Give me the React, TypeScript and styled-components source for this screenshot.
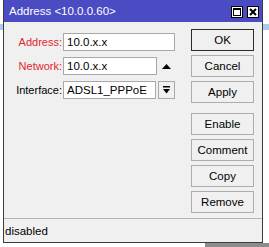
import styled, { createGlobalStyle } from 'styled-components'

const GlobalStyle = createGlobalStyle`
  html, body {
    margin: 0;
    padding: 0;
    background: #fff;
  }
  body {
    font-family: "Liberation Sans", Arial, sans-serif;
    font-size: 11px;
  }
`

const Desktop = styled.div`
  width: 269px;
  height: 247px;
  overflow: hidden;
  display: flex;
  flex-direction: column;
  padding-left: 3px;
  box-sizing: border-box;
  background:
    linear-gradient(90deg, transparent 0 205px, #8c8c8c 205px) bottom / 100% 4px no-repeat,
    linear-gradient(#ffffff 0 24px, #a9cdef 24px 30px, #ffffff 30px);
`

const Window = styled.div`
  width: 260px;
  height: 243px;
  flex: none;
  box-sizing: border-box;
  border: 1px solid #3c3c3c;
  border-top: none;
  background: #f0f0f0;
  display: flex;
  flex-direction: column;
`

const TitleBar = styled.div`
  height: 22px;
  flex: none;
  background: #4b4bc4;
  color: #fff;
  display: flex;
  align-items: center;
  justify-content: space-between;
  padding: 0 3px 0 5px;
  font-size: 11.5px;
`

const TitleButtons = styled.div`
  display: flex;
  gap: 4px;
  padding-top: 2px;
`

const TitleButton = styled.div`
  width: 12px;
  height: 12px;
  box-sizing: border-box;
  border: 1px solid #000;
  background: #fff;
  display: flex;
  align-items: center;
  justify-content: center;
`

const Content = styled.div`
  flex: 1;
  display: flex;
`

const Form = styled.div`
  flex: 1;
  padding-top: 11px;
  display: grid;
  grid-template-columns: 58px 112px;
  grid-auto-rows: 18px;
  column-gap: 1px;
  row-gap: 6px;
  align-content: start;
`

const Label = styled.div<{ $required?: boolean }>`
  display: flex;
  align-items: center;
  justify-content: flex-end;
  color: ${p => (p.$required ? '#e3262b' : '#000')};
`

const Field = styled.div`
  display: flex;
  gap: 1px;
`

const Input = styled.div<{ $width: number }>`
  width: ${p => p.$width}px;
  height: 18px;
  box-sizing: border-box;
  border: 1px solid #a8a8a8;
  background: #fff;
  display: flex;
  align-items: center;
  padding-left: 3px;
  font-size: 11.5px;
`

const ArrowCell = styled.div`
  flex: 1;
  display: flex;
  align-items: center;
  justify-content: center;
`

const DropButton = styled.div`
  width: 17px;
  height: 18px;
  box-sizing: border-box;
  border: 1px solid #a8a8a8;
  background: #f0f0f0;
  display: flex;
  align-items: center;
  justify-content: center;
  margin-left: 1px;
`

const Buttons = styled.div`
  width: 63px;
  padding: 7px 8px 0 0;
  display: flex;
  flex-direction: column;
  gap: 4px;
`

const Button = styled.div<{ $default?: boolean; $groupStart?: boolean }>`
  height: 22px;
  box-sizing: border-box;
  border: 1px solid ${p => (p.$default ? '#2b2b2b' : '#adadad')};
  background: #f0f0f0;
  display: flex;
  align-items: center;
  justify-content: center;
  font-size: 11.5px;
  margin-top: ${p => (p.$groupStart ? '6px' : '0')};
`

const Status = styled.div`
  height: 24px;
  flex: none;
  box-sizing: border-box;
  border-top: 1px solid #b4b4b4;
  display: flex;
  align-items: center;
  padding-left: 1px;
  font-size: 11.5px;
`

export default function App() {
  return (
    <>
      <GlobalStyle />
      <Desktop>
        <Window>
          <TitleBar>
            <span>Address &lt;10.0.0.60&gt;</span>
            <TitleButtons>
              <TitleButton>
                <svg width="8" height="8" viewBox="0 0 8 8">
                  <rect x="0.5" y="0.5" width="7" height="7" fill="none" stroke="#000" />
                  <rect x="0" y="0" width="8" height="2" fill="#000" />
                </svg>
              </TitleButton>
              <TitleButton>
                <svg width="8" height="8" viewBox="0 0 8 8">
                  <path d="M1 1 L7 7 M7 1 L1 7" stroke="#000" strokeWidth="2" />
                </svg>
              </TitleButton>
            </TitleButtons>
          </TitleBar>
          <Content>
            <Form>
              <Label $required>Address:</Label>
              <Field>
                <Input $width={112}>10.0.x.x</Input>
              </Field>
              <Label $required>Network:</Label>
              <Field>
                <Input $width={94}>10.0.x.x</Input>
                <ArrowCell>
                  <svg width="9" height="5" viewBox="0 0 9 5">
                    <path d="M4.5 0 L9 5 L0 5 Z" fill="#000" />
                  </svg>
                </ArrowCell>
              </Field>
              <Label>Interface:</Label>
              <Field>
                <Input $width={94}>ADSL1_PPPoE</Input>
                <DropButton>
                  <svg width="7" height="8" viewBox="0 0 7 8">
                    <rect x="0" y="0" width="7" height="1.5" fill="#000" />
                    <path d="M0 3 L7 3 L3.5 7.5 Z" fill="#000" />
                  </svg>
                </DropButton>
              </Field>
            </Form>
            <Buttons>
              <Button $default>OK</Button>
              <Button>Cancel</Button>
              <Button>Apply</Button>
              <Button $groupStart>Enable</Button>
              <Button>Comment</Button>
              <Button>Copy</Button>
              <Button>Remove</Button>
            </Buttons>
          </Content>
          <Status>disabled</Status>
        </Window>
      </Desktop>
    </>
  )
}
